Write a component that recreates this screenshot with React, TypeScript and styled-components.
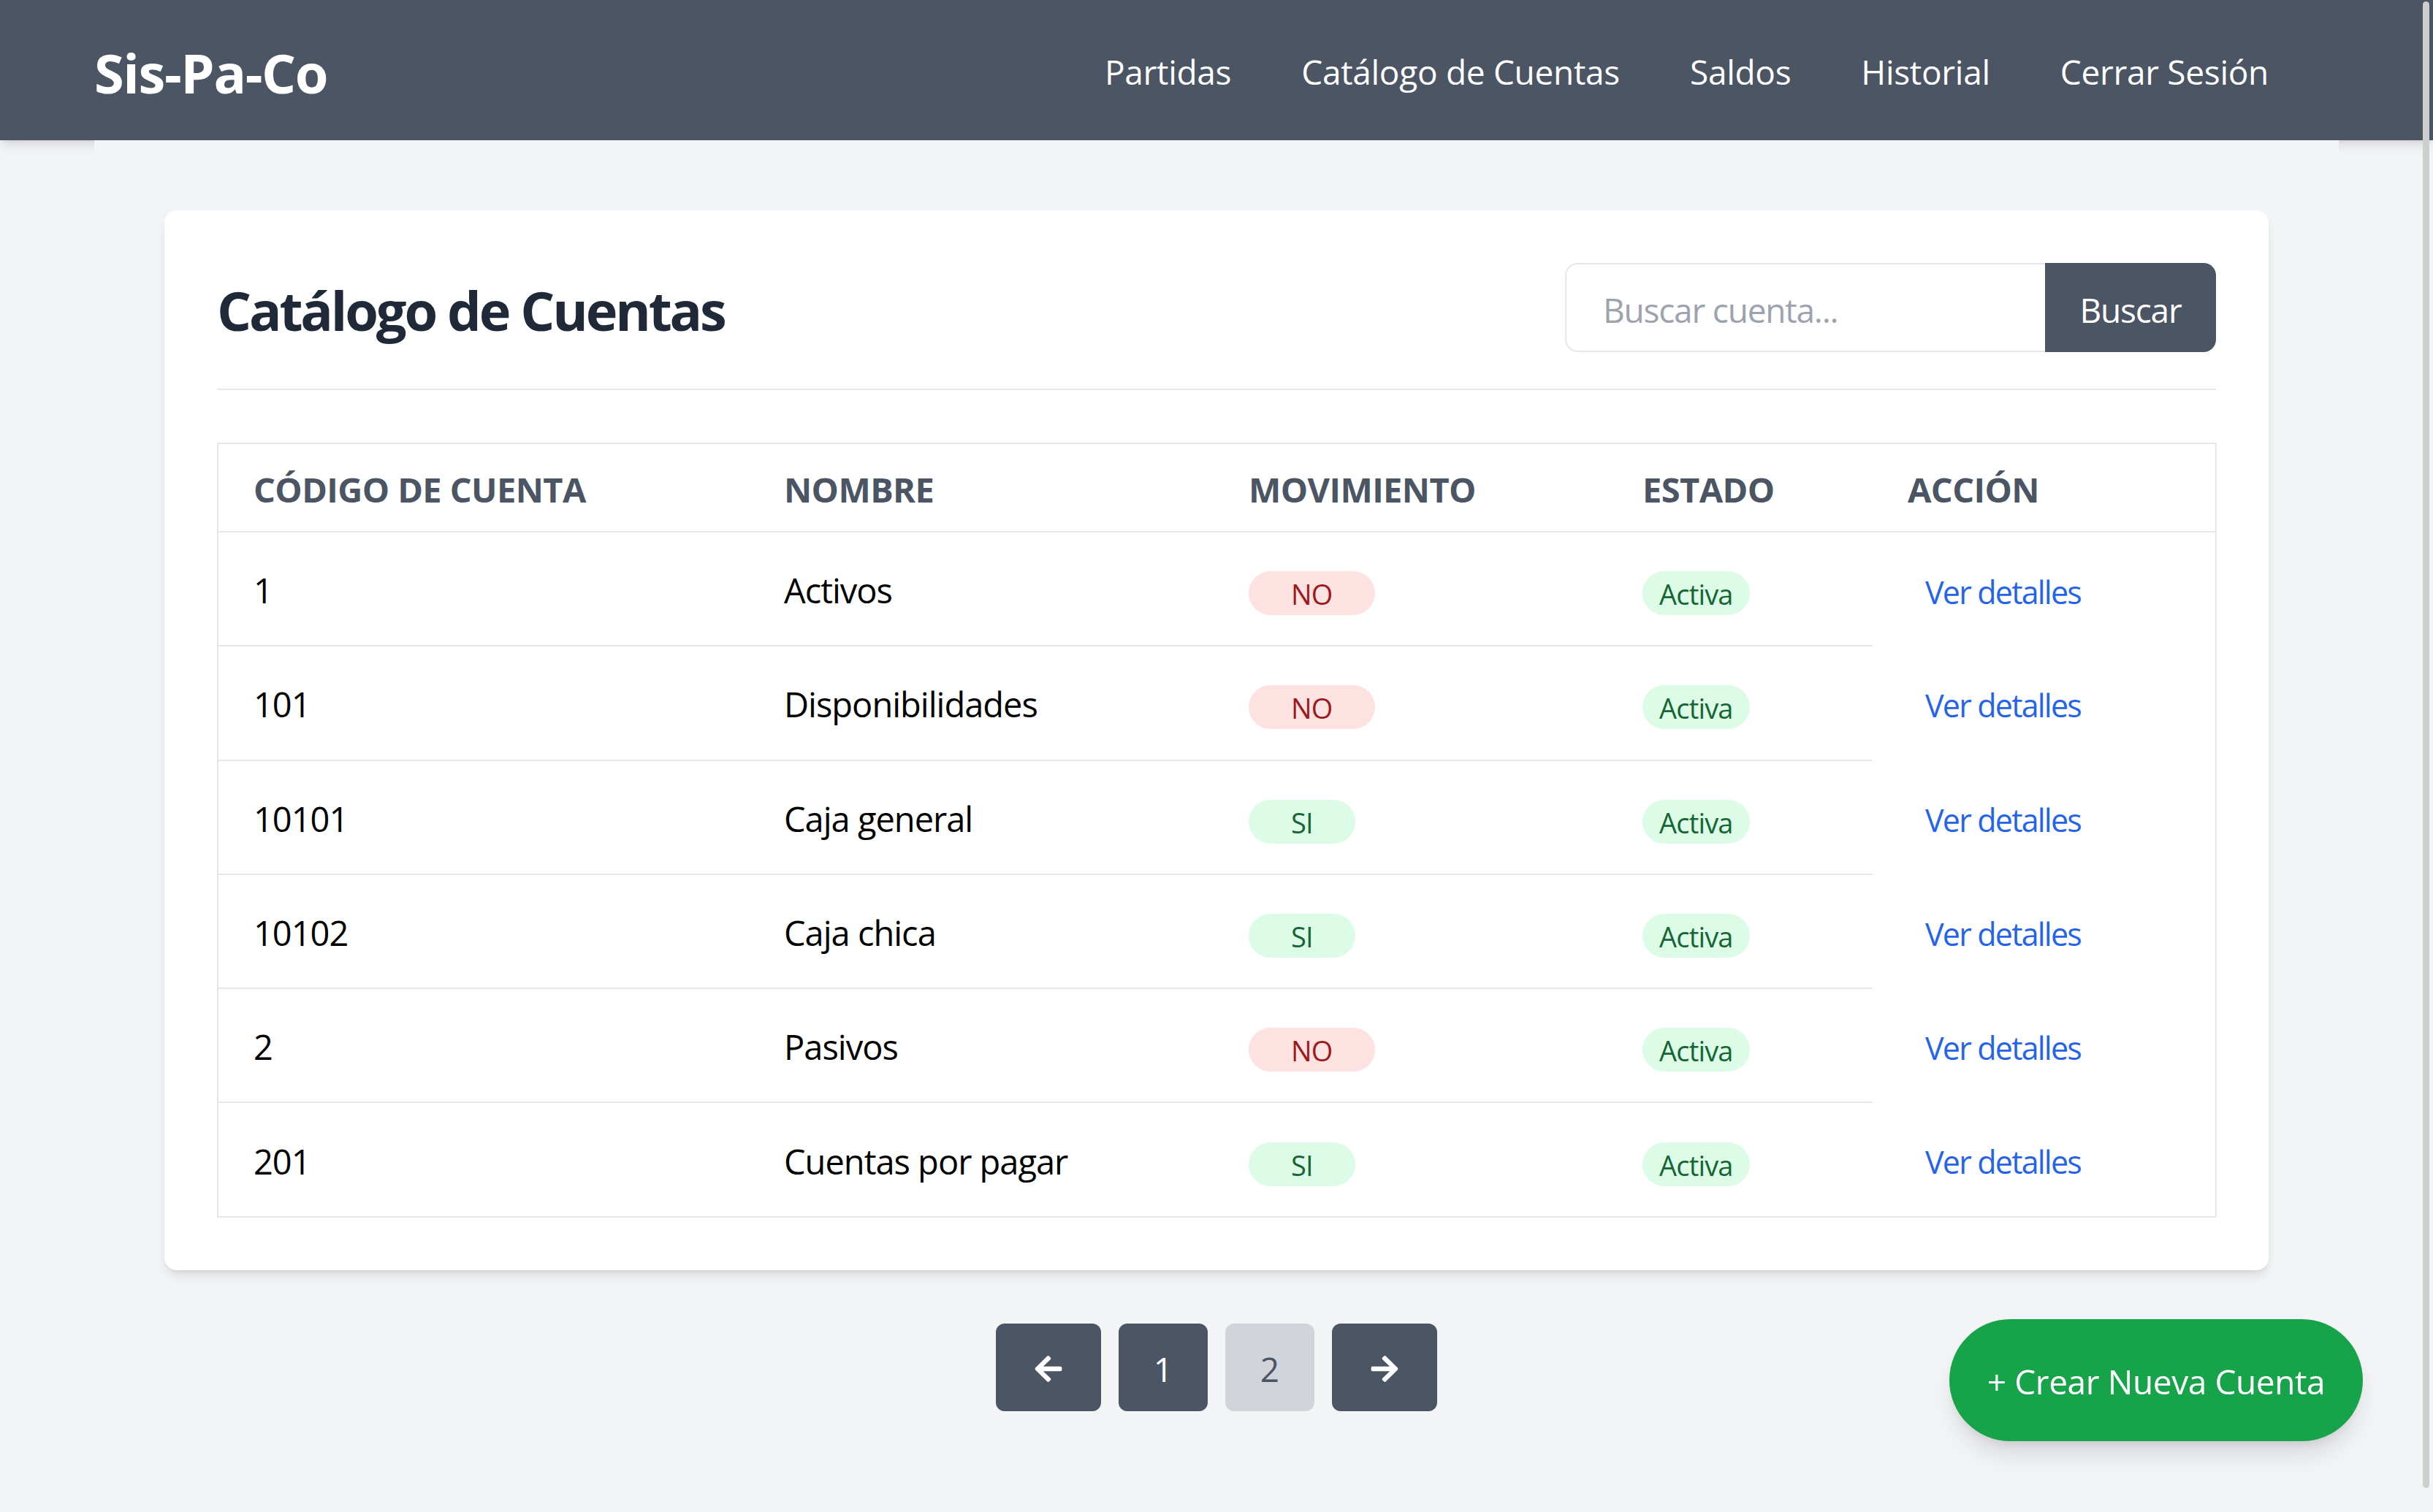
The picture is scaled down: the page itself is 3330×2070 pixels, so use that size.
import React from "react";
import styled, { createGlobalStyle } from "styled-components";
import { FaArrowLeft, FaArrowRight } from "react-icons/fa";

const GlobalStyle = createGlobalStyle`
  html, body {
    margin: 0;
    padding: 0;
    background: #f3f4f6;
    font-family: "Segoe UI", "Open Sans", "Noto Sans", sans-serif;
  }
  * { box-sizing: border-box; }
`;

const Page = styled.div`
  min-height: 2070px;
  background: #f3f4f6;
`;

const NavBar = styled.header`
  height: 192px;
  background: #4b5563;
  box-shadow: 0 10px 15px -3px rgba(0, 0, 0, 0.1), 0 4px 6px -4px rgba(0, 0, 0, 0.1);
`;

const NavInner = styled.div`
  max-width: 3072px;
  height: 100%;
  margin: 0 auto;
  padding: 0 96px 0 0;
  display: flex;
  align-items: center;
  justify-content: space-between;
`;

const Logo = styled.div`
  color: #ffffff;
  font-size: 74px;
  font-weight: 700;
  letter-spacing: -1.4px;
  padding-top: 6px;
`;

const NavLinks = styled.nav`
  display: flex;
  align-items: center;
  gap: 96px;
`;

const NavLink = styled.a`
  color: #ffffff;
  font-size: 46px;
  letter-spacing: -0.3px;
  text-decoration: none;
  padding-top: 4px;
`;

const Main = styled.main`
  position: relative;
  max-width: 3072px;
  margin: 0 auto;
  padding: 96px 0 120px;
  background: #f3f4f6;
`;

const Card = styled.section`
  width: 2880px;
  margin: 0 auto;
  background: #ffffff;
  border-radius: 17px;
  padding: 72px;
  box-shadow: 0 10px 15px -3px rgba(0, 0, 0, 0.1), 0 4px 6px -4px rgba(0, 0, 0, 0.1);
`;

const CardHeader = styled.div`
  display: flex;
  align-items: center;
  justify-content: space-between;
  padding-bottom: 50px;
  border-bottom: 2px solid #e5e7eb;
  margin-bottom: 72px;
`;

const Title = styled.h1`
  margin: 0;
  color: #1f2937;
  font-size: 74px;
  font-weight: 700;
  letter-spacing: -3.2px;
  padding-top: 6px;
`;

const SearchForm = styled.form`
  display: flex;
  height: 122px;
`;

const SearchInput = styled.input`
  width: 657px;
  height: 100%;
  border: 2px solid #e5e7eb;
  border-right: none;
  border-radius: 17px 0 0 17px;
  padding: 6px 50px 0;
  font-family: inherit;
  font-size: 46px;
  letter-spacing: -1.2px;
  color: #111827;
  outline: none;
  &::placeholder {
    color: #9ca3af;
  }
`;

const SearchButton = styled.button`
  width: 234px;
  height: 100%;
  border: none;
  border-radius: 0 17px 17px 0;
  background: #4b5563;
  color: #ffffff;
  font-family: inherit;
  font-size: 46px;
  letter-spacing: -1.2px;
  padding-top: 6px;
`;

const Table = styled.table`
  width: 100%;
  table-layout: fixed;
  border-collapse: collapse;
  border: 2px solid #e5e7eb;
`;

const Th = styled.th<{ $w: number }>`
  width: ${(p) => p.$w}px;
  height: 121px;
  padding: 4px 0 0 48px;
  text-align: left;
  color: #4b5563;
  font-size: 47px;
  font-weight: 700;
  letter-spacing: -0.6px;
  text-transform: uppercase;
  border-bottom: 2px solid #e5e7eb;
  vertical-align: middle;
`;

const Td = styled.td<{ $last?: boolean }>`
  height: 156.3px;
  padding: 4px 0 0 48px;
  color: #000000;
  font-size: 47px;
  letter-spacing: -1px;
  vertical-align: middle;
  border-bottom: ${(p) => (p.$last ? "none" : "2px solid #e5e7eb")};
`;

const Badge = styled.span<{ $tone: "red" | "green"; $wide?: boolean }>`
  display: inline-block;
  height: 60px;
  line-height: 62px;
  margin-top: 8px;
  padding: 0 ${(p) => (p.$wide ? 58 : 23)}px;
  border-radius: 999px;
  font-size: 38px;
  letter-spacing: -0.8px;
  background: ${(p) => (p.$tone === "red" ? "#fee2e2" : "#dcfce7")};
  color: ${(p) => (p.$tone === "red" ? "#991b1b" : "#166534")};
`;

const DetailLink = styled.a`
  display: inline-block;
  padding-left: 24px;
  color: #2563eb;
  font-size: 43px;
  letter-spacing: -1.8px;
  text-decoration: none;
`;

const Pagination = styled.div`
  display: flex;
  justify-content: center;
  gap: 24px;
  margin-top: 73px;
`;

const PageButton = styled.button<{ $active?: boolean; $arrow?: boolean }>`
  width: ${(p) => (p.$arrow ? 144 : 122)}px;
  height: 120px;
  border: none;
  border-radius: 12px;
  display: flex;
  align-items: center;
  justify-content: center;
  background: ${(p) => (p.$active ? "#d1d5db" : "#4b5563")};
  color: ${(p) => (p.$active ? "#4b5563" : "#ffffff")};
  font-family: inherit;
  font-size: 46px;
  padding: 4px 0 0;
`;

const Fab = styled.button`
  position: fixed;
  right: 96px;
  bottom: 97px;
  width: 566px;
  height: 167px;
  border: none;
  border-radius: 999px;
  background: #16a34a;
  color: #ffffff;
  font-family: inherit;
  font-size: 46px;
  letter-spacing: -0.4px;
  padding-top: 4px;
  box-shadow: 0 24px 36px -8px rgba(0, 0, 0, 0.12), 0 10px 16px -8px rgba(0, 0, 0, 0.1);
`;

const ScrollThumb = styled.div`
  position: fixed;
  top: 2px;
  right: 5px;
  width: 9px;
  height: 2035px;
  border-radius: 5px;
  background: #cdcfcf;
`;

type Row = { code: string; name: string; mov: boolean };

const rows: Row[] = [
  { code: "1", name: "Activos", mov: false },
  { code: "101", name: "Disponibilidades", mov: false },
  { code: "10101", name: "Caja general", mov: true },
  { code: "10102", name: "Caja chica", mov: true },
  { code: "2", name: "Pasivos", mov: false },
  { code: "201", name: "Cuentas por pagar", mov: true },
];

const columns: { label: string; w: number }[] = [
  { label: "Código de cuenta", w: 727 },
  { label: "Nombre", w: 636 },
  { label: "Movimiento", w: 539 },
  { label: "Estado", w: 363 },
  { label: "Acción", w: 470 },
];

export default function App() {
  return (
    <Page>
      <GlobalStyle />
      <NavBar>
        <NavInner>
          <Logo>Sis-Pa-Co</Logo>
          <NavLinks>
            <NavLink href="#">Partidas</NavLink>
            <NavLink href="#">Catálogo de Cuentas</NavLink>
            <NavLink href="#">Saldos</NavLink>
            <NavLink href="#">Historial</NavLink>
            <NavLink href="#">Cerrar Sesión</NavLink>
          </NavLinks>
        </NavInner>
      </NavBar>
      <Main>
        <Card>
          <CardHeader>
            <Title>Catálogo de Cuentas</Title>
            <SearchForm onSubmit={(e) => e.preventDefault()}>
              <SearchInput placeholder="Buscar cuenta..." />
              <SearchButton type="submit">Buscar</SearchButton>
            </SearchForm>
          </CardHeader>
          <Table>
            <thead>
              <tr>
                {columns.map((c) => (
                  <Th key={c.label} $w={c.w}>
                    {c.label}
                  </Th>
                ))}
              </tr>
            </thead>
            <tbody>
              {rows.map((r) => (
                <tr key={r.code}>
                  <Td>{r.code}</Td>
                  <Td>{r.name}</Td>
                  <Td>
                    <Badge $tone={r.mov ? "green" : "red"} $wide>
                      {r.mov ? "SI" : "NO"}
                    </Badge>
                  </Td>
                  <Td>
                    <Badge $tone="green">Activa</Badge>
                  </Td>
                  <Td $last>
                    <DetailLink href="#">Ver detalles</DetailLink>
                  </Td>
                </tr>
              ))}
            </tbody>
          </Table>
        </Card>
        <Pagination>
          <PageButton $arrow aria-label="Anterior">
            <FaArrowLeft size={42} />
          </PageButton>
          <PageButton>1</PageButton>
          <PageButton $active>2</PageButton>
          <PageButton $arrow aria-label="Siguiente">
            <FaArrowRight size={42} />
          </PageButton>
        </Pagination>
      </Main>
      <Fab>+ Crear Nueva Cuenta</Fab>
      <ScrollThumb />
    </Page>
  );
}
